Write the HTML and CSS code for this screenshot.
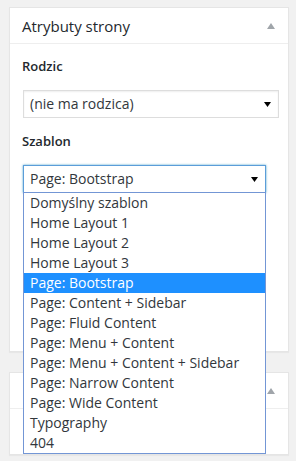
FILE: index.html
```html
<!DOCTYPE html>
<html lang="pl">
<head>
  <meta charset="UTF-8" />
  <meta name="viewport" content="width=device-width, initial-scale=1.0"/>
  <title>Atrybuty strony</title>
  <link rel="stylesheet" href="styles.css">
</head>
<body>
  <div class="postbox">
    <div class="hndle">
      <h2>Atrybuty strony</h2>
      <span class="toggle"></span>
    </div>
    <div class="inside first">
      <p class="label">Rodzic</p>
      <div class="select parent">
        <span>(nie ma rodzica)</span>
        <svg width="7" height="5" viewBox="0 0 7 5"><path d="M0 0h7L3.5 5z"/></svg>
      </div>

      <p class="label">Szablon</p>
      <div class="select template focus">
        <span>Page: Bootstrap</span>
        <svg width="7" height="5" viewBox="0 0 7 5"><path d="M0 0h7L3.5 5z"/></svg>
        <ul class="options">
          <li>Domyślny szablon</li>
          <li>Home Layout 1</li>
          <li>Home Layout 2</li>
          <li>Home Layout 3</li>
          <li class="selected">Page: Bootstrap</li>
          <li>Page: Content + Sidebar</li>
          <li>Page: Fluid Content</li>
          <li>Page: Menu + Content</li>
          <li>Page: Menu + Content + Sidebar</li>
          <li>Page: Narrow Content</li>
          <li>Page: Wide Content</li>
          <li>Typography</li>
          <li>404</li>
        </ul>
      </div>
    </div>
  </div>

  <!-- second box is hidden behind the open list -->
  <div class="postbox">
    <div class="hndle">
      <span class="toggle"></span>
    </div>
    <div class="inside second"></div>
  </div>
</body>
</html>
```

FILE: styles.css
```css
body {
  margin: 0;
  padding: 7px 8px 0 9px;
  background: #f1f1f1;
  font-family: "Open Sans", "Noto Sans", sans-serif;
  color: #32373c;
}

.postbox {
  width: 278px;
  background: #fff;
  border: 1px solid #e5e5e5;
  box-shadow: 0 1px 1px rgba(0,0,0,0.04);
  margin-bottom: 20px;
}

.hndle {
  display: flex;
  align-items: center;
  min-height: 20px;
  padding: 8px 13px 7px 12px;
  border-bottom: 1px solid #eee;
}

.hndle h2 {
  margin: 0;
  font-size: 15px;
  font-weight: 400;
  line-height: 20px;
  color: #23282d;
}

.toggle {
  margin-left: auto;
  width: 0;
  height: 0;
  border-left: 4px solid transparent;
  border-right: 4px solid transparent;
  border-bottom: 6px solid #a0a5aa;
}

.inside {
  padding: 0 12px;
}

.inside.first {
  padding-bottom: 158px;
}

.inside.second {
  height: 45px;
}

.label {
  margin: 13px 0 14px;
  font-size: 13px;
  font-weight: 600;
  line-height: 20px;
  color: #23282d;
}

.inside.first .label:first-child {
  margin-top: 12px;
}

.select {
  position: relative;
  display: flex;
  align-items: center;
  height: 26px;
  margin-left: 1px;
  padding: 0 7px 0 6px;
  border: 1px solid #ddd;
  font-size: 14px;
  line-height: 20px;
  box-shadow: inset 0 1px 2px rgba(0,0,0,0.07);
}

.select svg {
  margin-left: auto;
  fill: #000;
}

.parent {
  width: 241px;
}

.template {
  width: 228px;
}

.focus {
  border-color: #5b9dd9;
  box-shadow: 0 0 2px rgba(30,140,190,0.8);
}

.options {
  position: absolute;
  top: 26px;
  left: -1px;
  right: -1px;
  margin: 0;
  padding: 0;
  list-style: none;
  background: #fff;
  border: 1px solid #7396d5;
  z-index: 10;
}

.options li {
  padding: 0 6px;
  height: 20px;
  line-height: 20px;
  font-size: 14px;
  color: #32373c;
  white-space: nowrap;
}

.options li.selected {
  background: #1e90ff;
  color: #fff;
}
```
